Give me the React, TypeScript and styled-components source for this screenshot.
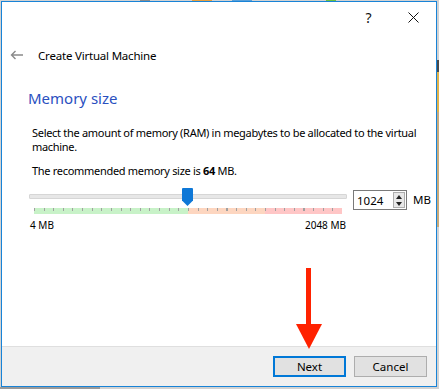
import styled, { createGlobalStyle } from 'styled-components';

const GlobalStyle = createGlobalStyle`
  html, body {
    margin: 0;
    padding: 0;
  }
  body {
    width: 439px;
    height: 389px;
    overflow: hidden;
    font-family: 'Noto Sans', 'Open Sans', sans-serif;
    color: #000;
  }
`;

const Desktop = styled.div`
  width: 439px;
  height: 389px;
  padding: 1px 0 0 1px;
  box-sizing: border-box;
  background:
    linear-gradient(#4a4a4a, #4a4a4a) 437px 60px / 2px 12px no-repeat,
    linear-gradient(#e0b24a, #e0b24a) 437px 72px / 2px 40px no-repeat,
    linear-gradient(#c9aa7a, #c9aa7a) 437px 112px / 2px 115px no-repeat,
    linear-gradient(#9a9a9a, #9a9a9a) 0 387px / 100px 2px no-repeat,
    linear-gradient(#8c8c8c, #8c8c8c) 140px 0 / 10px 1px no-repeat,
    linear-gradient(#e8a040, #e8a040) 192px 0 / 20px 1px no-repeat,
    linear-gradient(#5aa0d8, #5aa0d8) 232px 0 / 20px 1px no-repeat,
    linear-gradient(#6cc040, #6cc040) 326px 0 / 10px 1px no-repeat,
    #d2d2d2;
`;

const Window = styled.div`
  position: relative;
  width: 436px;
  height: 386px;
  box-sizing: border-box;
  border: 1px solid #1883d7;
  background: #fff;
  display: flex;
  flex-direction: column;
`;

const TitleBar = styled.div`
  height: 32px;
  display: flex;
  justify-content: flex-end;
  flex-shrink: 0;
`;

const CaptionButton = styled.div`
  width: 45px;
  height: 30px;
  display: flex;
  align-items: center;
  justify-content: center;
  font-size: 14px;
  color: #111;
`;

const Header = styled.div`
  margin-top: 13px;
  height: 16px;
  display: flex;
  align-items: center;
  padding-left: 8px;
  font-size: 11.5px;
  letter-spacing: -0.2px;
  color: #000;

  svg {
    width: 14px;
    height: 10px;
    margin-right: 14px;
  }
`;

const Content = styled.div`
  padding: 0 0 0 27px;
  flex: 1;
`;

const Heading = styled.div`
  margin-top: 24px;
  margin-left: -1px;
  font-size: 15px;
  line-height: 22px;
  color: #2a50bf;
`;

const Paragraph = styled.p<{ $top: number }>`
  margin: ${({ $top }) => $top}px 0 0 3px;
  font-size: 11px;
  letter-spacing: -0.3px;
  line-height: 14px;
  padding-right: 4px;

  b {
    font-weight: 700;
  }
`;

const SliderRow = styled.div`
  margin-top: 10px;
  display: flex;
  align-items: flex-start;
`;

const SliderCol = styled.div`
  position: relative;
  width: 318px;
  height: 26px;
`;

const Track = styled.div`
  margin-top: 6px;
  height: 3px;
  background: #e7e7e7;
  border: 1px solid #d6d6d6;
  border-radius: 1px;
`;

const Ticks = styled.div`
  margin: 9px 0 0 5px;
  width: 308px;
  height: 6px;
  background:
    repeating-linear-gradient(90deg, #a0a0a0 0 1px, transparent 1px 9.625px) 0 0 / 100% 3px no-repeat,
    linear-gradient(90deg, #c8f2c8 0 50%, #fdd6c0 50% 75%, #ffc6c6 75% 100%);
`;

const Thumb = styled.div`
  position: absolute;
  left: 153px;
  top: 0;
  width: 11px;
  height: 18px;
  background: #0f78d7;
  clip-path: polygon(0 0, 100% 0, 100% 70%, 50% 100%, 0 70%);
  border-radius: 1px;
`;

const SpinBox = styled.div`
  margin-left: 6px;
  margin-top: 2px;
  width: 54px;
  height: 20px;
  box-sizing: border-box;
  border: 1px solid #7a7a7a;
  display: flex;
  align-items: center;
  justify-content: space-between;
  padding: 0 1px 0 3px;
  font-size: 11.5px;
`;

const SpinButtons = styled.div`
  width: 12px;
  height: 16px;
  box-sizing: border-box;
  border: 1px solid #adadad;
  background: #e8e8e8;
  display: flex;
  flex-direction: column;
  align-items: center;
  justify-content: space-around;

  svg {
    width: 6px;
    height: 4px;
  }
`;

const Unit = styled.span`
  margin: 4px 0 0 6px;
  font-size: 11.5px;
`;

const RangeLabels = styled.div`
  width: 318px;
  margin-top: 4px;
  display: flex;
  justify-content: space-between;
  font-size: 10px;
  line-height: 14px;
  padding: 0 1px;
  box-sizing: border-box;
`;

const Footer = styled.div`
  height: 40px;
  flex-shrink: 0;
  border-top: 1px solid #dfdfdf;
  background: #f0f0f0;
  display: flex;
  justify-content: flex-end;
  align-items: flex-start;
  gap: 8px;
  padding: 9px 9px 0 0;
  box-sizing: border-box;
`;

const Button = styled.div<{ $default?: boolean }>`
  width: 73px;
  height: 21px;
  box-sizing: border-box;
  border: ${({ $default }) => ($default ? '2px solid #0078d7' : '1px solid #adadad')};
  background: #e1e1e1;
  display: flex;
  align-items: center;
  justify-content: center;
  font-size: 11.5px;
`;

const Arrow = styled.svg`
  position: absolute;
  left: 292px;
  top: 266px;
  width: 30px;
  height: 82px;
`;

export default function App() {
  return (
    <>
      <GlobalStyle />
      <Desktop>
        <Window>
          <TitleBar>
            <CaptionButton>?</CaptionButton>
            <CaptionButton>
              <svg width="11" height="11" viewBox="0 0 11 11">
                <path d="M0.5 0.5L10.5 10.5M10.5 0.5L0.5 10.5" stroke="#111" strokeWidth="1" />
              </svg>
            </CaptionButton>
          </TitleBar>
          <Header>
            <svg viewBox="0 0 14 10">
              <path d="M13 5H1.5M5.5 1L1.5 5l4 4" stroke="#8a8a8a" strokeWidth="1.4" fill="none" />
            </svg>
            Create Virtual Machine
          </Header>
          <Content>
            <Heading>Memory size</Heading>
            <Paragraph $top={17}>
              Select the amount of memory (RAM) in megabytes to be allocated to the virtual machine.
            </Paragraph>
            <Paragraph $top={10}>
              The recommended memory size is <b>64</b> MB.
            </Paragraph>
            <SliderRow>
              <SliderCol>
                <Track />
                <Ticks />
                <Thumb />
              </SliderCol>
              <SpinBox>
                1024
                <SpinButtons>
                  <svg viewBox="0 0 6 4">
                    <path d="M0 4L3 0l3 4z" fill="#222" />
                  </svg>
                  <svg viewBox="0 0 6 4">
                    <path d="M0 0h6L3 4z" fill="#222" />
                  </svg>
                </SpinButtons>
              </SpinBox>
              <Unit>MB</Unit>
            </SliderRow>
            <RangeLabels>
              <span>4 MB</span>
              <span>2048 MB</span>
            </RangeLabels>
          </Content>
          <Footer>
            <Button $default>Next</Button>
            <Button>Cancel</Button>
          </Footer>
          <Arrow viewBox="0 0 30 82">
            <rect x="12" y="0" width="5" height="60" fill="#ff2200" />
            <path d="M2 56H28L15 81z" fill="#ff2200" />
          </Arrow>
        </Window>
      </Desktop>
    </>
  );
}
